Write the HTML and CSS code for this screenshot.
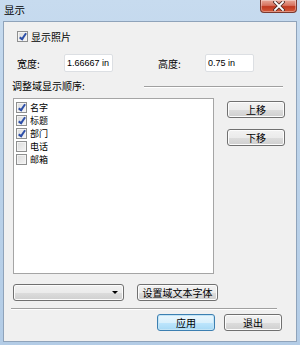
FILE: index.html
```html
<!DOCTYPE html>
<html>
<head>
  <title>显示</title>
  <meta charset="UTF-8">
  <link rel="stylesheet" href="styles.css">
</head>
<body>
  <div class="window">
    <div class="titlebar">
      <span class="title">显示</span>
      <span class="close">
        <svg width="12" height="10" viewBox="0 0 12 10">
          <path d="M2 1 L10 9 M10 1 L2 9" stroke="#4a2a24" stroke-width="3.4" stroke-linecap="square"/>
          <path d="M2 1 L10 9 M10 1 L2 9" stroke="#fff" stroke-width="1.8" stroke-linecap="square"/>
        </svg>
      </span>
    </div>
    <div class="client">
      <div class="row-photo">
        <span class="check on"></span><span class="label">显示照片</span>
      </div>
      <div class="row-size">
        <span class="label w-label">宽度:</span>
        <span class="field">1.66667 in</span>
        <span class="label h-label">高度:</span>
        <span class="field">0.75 in</span>
      </div>
      <div class="row-order">
        <span class="label">调整域显示顺序:</span>
        <span class="rule"></span>
      </div>
      <div class="row-list">
        <div class="listbox">
          <div class="item"><span class="check on"></span>名字</div>
          <div class="item"><span class="check on"></span>标题</div>
          <div class="item"><span class="check on"></span>部门</div>
          <div class="item"><span class="check"></span>电话</div>
          <div class="item"><span class="check"></span>邮箱</div>
        </div>
        <div class="side">
          <button class="btn move">上移</button>
          <button class="btn move">下移</button>
        </div>
      </div>
      <div class="row-font">
        <div class="combo"><span class="arrow"></span></div>
        <button class="btn font-btn">设置域文本字体</button>
      </div>
      <div class="sep"></div>
      <div class="row-actions">
        <button class="btn act default">应用</button>
        <button class="btn act">退出</button>
      </div>
    </div>
  </div>
</body>
</html>
```

FILE: styles.css
```css
body {
  margin: 0;
  font-family: "Noto Sans CJK SC", "DejaVu Sans", sans-serif;
  font-size: 10px;
  line-height: 13px;
  color: #000;
}

.window {
  width: 300px;
  height: 345px;
  background: linear-gradient(to bottom, #c7dbef 0%, #bcd3ea 40%, #b3cce6 100%);
  display: flex;
  flex-direction: column;
  overflow: hidden;
}

.titlebar {
  height: 21px;
  display: flex;
  align-items: flex-start;
  justify-content: space-between;
  flex-shrink: 0;
}

.title {
  margin-left: 4px;
  margin-top: 3px;
  font-size: 10.5px;
  line-height: 14px;
}

.close {
  width: 37px;
  height: 13px;
  margin-right: 3px;
  border: 1px solid #7a3a30;
  border-top: none;
  border-radius: 0 0 4px 4px;
  background: linear-gradient(to bottom, #e8a898 0%, #d7735f 45%, #c0391f 55%, #d45a3a 100%);
  display: flex;
  align-items: center;
  justify-content: center;
  box-sizing: border-box;
  box-shadow: inset 0 0 0 1px rgba(255,255,255,0.35);
}

.client {
  margin: 0 3px 3px 3px;
  flex: 1;
  background: #f0f0f0;
  border: 1px solid #8fa3ba;
}

.label {
  line-height: 13px;
  white-space: nowrap;
}

.check {
  display: inline-block;
  width: 9px;
  height: 9px;
  border: 1px solid #8e8f8f;
  background: linear-gradient(135deg, #dcdcdc 0%, #f4f4f4 100%);
  box-shadow: inset 0 0 0 1px #f4f4f4;
  position: relative;
  flex-shrink: 0;
}

.check.on::after {
  content: "";
  position: absolute;
  left: 3px;
  top: 0px;
  width: 2px;
  height: 6px;
  border: solid #2d4fa8;
  border-width: 0 2px 2px 0;
  transform: rotate(35deg);
}

.row-photo {
  display: flex;
  align-items: center;
  gap: 3px;
  margin: 8px 0 0 13px;
  height: 13px;
}

.row-size {
  display: flex;
  align-items: center;
  margin: 11px 0 0 13px;
  height: 18px;
}

.w-label {
  width: 47px;
}

.h-label {
  margin-left: 45px;
  width: 47px;
}

.field {
  background: #fff;
  border: 1px solid #dcdfe3;
  border-radius: 2px;
  font-family: "Liberation Sans", sans-serif;
  font-size: 9px;
  line-height: 16px;
  padding-left: 2px;
  box-sizing: border-box;
  width: 49px;
  height: 18px;
  white-space: nowrap;
  overflow: hidden;
}

.row-order {
  display: flex;
  align-items: center;
  margin: 7px 0 0 8px;
  height: 13px;
}

.rule {
  display: block;
  margin-left: 59px;
  width: 139px;
  height: 0;
  border-top: 1px solid #a0a0a0;
  border-bottom: 1px solid #fff;
  margin-top: 2px;
}

.row-list {
  display: flex;
  margin: 6px 0 0 9px;
}

.listbox {
  width: 201px;
  height: 176px;
  background: #fff;
  border: 1px solid #a5a5a5;
  box-sizing: border-box;
  padding: 2px 0 0 2px;
}

.item {
  display: flex;
  align-items: center;
  gap: 3px;
  height: 13px;
  font-size: 9px;
  line-height: 13px;
}

.side {
  display: flex;
  flex-direction: column;
  gap: 11px;
  margin: 3px 0 0 13px;
}

.btn {
  font-family: "Noto Sans CJK SC", sans-serif;
  font-size: 10px;
  color: #000;
  border: 1px solid #707070;
  border-radius: 3px;
  background: linear-gradient(to bottom, #f2f2f2 0%, #ebebeb 50%, #dddddd 51%, #cfcfcf 100%);
  box-shadow: inset 0 0 0 1px #fcfcfc;
  padding: 0;
  height: 17px;
  line-height: 15px;
  box-sizing: border-box;
  white-space: nowrap;
}

.move {
  width: 58px;
}

.row-font {
  display: flex;
  align-items: center;
  gap: 13px;
  margin: 10px 0 0 9px;
}

.combo {
  width: 111px;
  height: 17px;
  border: 1px solid #707070;
  border-radius: 3px;
  background: linear-gradient(to bottom, #f2f2f2 0%, #ebebeb 50%, #dddddd 51%, #cfcfcf 100%);
  box-shadow: inset 0 0 0 1px #fcfcfc;
  box-sizing: border-box;
  display: flex;
  align-items: center;
  justify-content: flex-end;
}

.arrow {
  width: 0;
  height: 0;
  border-left: 3px solid transparent;
  border-right: 3px solid transparent;
  border-top: 3px solid #000;
  margin-right: 5px;
}

.font-btn {
  width: 81px;
}

.sep {
  margin: 7px 0 0 7px;
  width: 266px;
  border-top: 1px solid #a0a0a0;
  border-bottom: 1px solid #fff;
}

.row-actions {
  display: flex;
  gap: 9px;
  margin: 4px 0 0 153px;
}

.act {
  width: 58px;
}

.default {
  border-color: #3c7fb1;
  background: linear-gradient(to bottom, #eaf6fd 0%, #d9f0fc 50%, #bee6fd 51%, #a7d9f5 100%);
  box-shadow: inset 0 0 0 1px #c2e4f6;
}
```
